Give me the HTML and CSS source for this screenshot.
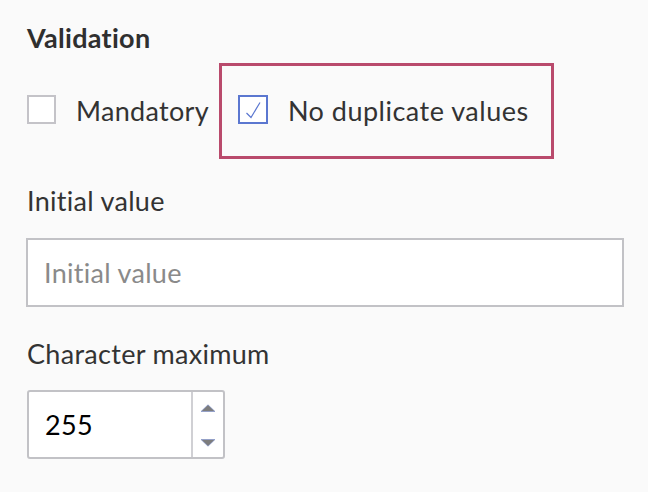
FILE: index.html
```html
<html>
    <head>
        <title>Field settings</title>
        <meta charset="utf-8">
        <link rel="stylesheet" href="styles.css">
    </head>
    <body>
        <div class="panel">
            <h3 class="section-title">Validation</h3>

            <div class="check-row">
                <label class="check-item">
                    <span class="check-box"></span>
                    <span class="check-text">Mandatory</span>
                </label>
                <label class="check-item highlight">
                    <span class="check-box checked">
                        <svg width="20" height="20" viewBox="0 0 20 20">
                            <path d="M3.5 13 L8 17.5 L17 2.5" fill="none" stroke="#5b77d0" stroke-width="1.2"/>
                        </svg>
                    </span>
                    <span class="check-text">No duplicate values</span>
                </label>
            </div>

            <div class="field first">
                <div class="field-label">Initial value</div>
                <div class="text-input">Initial value</div>
            </div>

            <div class="field">
                <div class="field-label">Character maximum</div>
                <div class="number-input">
                    <span class="number-value">255</span>
                    <span class="stepper">
                        <svg width="16" height="8" viewBox="0 0 16 8"><path d="M1 7.5 L8 0.8 L15 7.5 Z" fill="#7d7d7d" stroke="#7b8fce" stroke-width="0.6"/></svg>
                        <svg width="16" height="8" viewBox="0 0 16 8"><path d="M1 0.5 L8 7.2 L15 0.5 Z" fill="#7d7d7d" stroke="#7b8fce" stroke-width="0.6"/></svg>
                    </span>
                </div>
            </div>
        </div>
    </body>
</html>
```

FILE: styles.css
```css
html,
body {
    margin: 0;
    width: 100%;
    height: 100%;
    background-color: #fafafa;
}
.panel {
    padding: 22px 24px 0 27px;
    font-family: "Lato", "Liberation Sans", sans-serif;
    font-size: 27px;
    line-height: 32px;
    letter-spacing: 0.3px;
    color: #333333;
}
.section-title {
    margin: 0;
    font-size: 27px;
    line-height: 32px;
    font-weight: bold;
    color: #2f2f2f;
}
.check-row {
    display: flex;
    align-items: center;
    margin-top: 9px;
}
.check-item {
    display: flex;
    align-items: center;
    gap: 20px;
}
.check-item.highlight {
    margin-left: 10px;
    padding: 29px 22px 29px 16px;
    border: 3px solid #b94a6c;
}
.highlight .check-text {
    letter-spacing: 0.5px;
}
.check-box {
    display: flex;
    align-items: center;
    justify-content: center;
    box-sizing: border-box;
    width: 29px;
    height: 29px;
    margin-bottom: 3px;
    border: 2px solid #c4c3c8;
    background-color: white;
}
.check-box.checked {
    width: 30px;
    border-color: #5b77d0;
}
.field {
    margin-top: 31px;
}
.field.first {
    margin-top: 26px;
}
.text-input {
    box-sizing: border-box;
    width: 598px;
    height: 69px;
    margin-top: 21px;
    margin-left: -1px;
    padding-left: 16px;
    display: flex;
    align-items: center;
    border: 2px solid #c2c2c6;
    background-color: white;
    color: #8a8a8a;
}
.number-input {
    box-sizing: border-box;
    width: 198px;
    height: 69px;
    margin-top: 20px;
    display: flex;
    border: 2px solid #c2c2c6;
    border-radius: 3px;
    background-color: white;
}
.number-value {
    flex: 1;
    display: flex;
    align-items: center;
    padding-left: 16px;
    color: black;
}
.stepper {
    width: 32px;
    border-left: 2px solid #d0d0d4;
    display: flex;
    flex-direction: column;
    align-items: center;
    justify-content: space-between;
    padding: 12px 0 10px;
    box-sizing: border-box;
}
```
